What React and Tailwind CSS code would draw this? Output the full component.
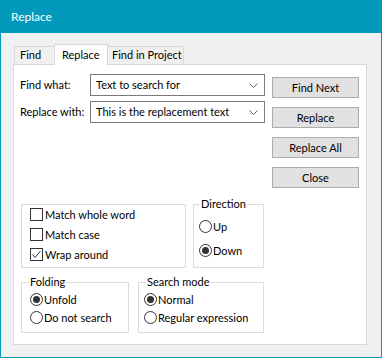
import { useState } from 'react';

const font = { fontFamily: 'Lato, "Liberation Sans", sans-serif' };

function Combo({ value }) {
  return (
    <div className="w-[175px] h-[22px] bg-white border border-[#7a7a7a] flex items-center justify-between pl-[5px] pr-[6px]">
      <span className="text-[11px] text-black whitespace-nowrap">{value}</span>
      <svg width="9" height="5" viewBox="0 0 9 5" fill="none" stroke="#606060" strokeWidth="1">
        <polyline points="0.5,0.5 4.5,4.5 8.5,0.5" />
      </svg>
    </div>
  );
}

function Btn({ children }) {
  return (
    <button type="button" className="w-[87px] h-[21px] bg-[#e1e1e1] border border-[#adadad] text-[11px] text-black leading-none">
      {children}
    </button>
  );
}

function CheckBox({ checked, label }) {
  return (
    <div className="flex items-center h-[13px]">
      <span className="w-[13px] h-[13px] border border-[#333] bg-white flex items-center justify-center">
        {checked && (
          <svg width="11" height="11" viewBox="0 0 11 11" fill="none" stroke="#333" strokeWidth="1">
            <polyline points="1.5,5.5 4,8.5 9.5,2" />
          </svg>
        )}
      </span>
      <span className="ml-[2px] text-[11px] text-black leading-none whitespace-nowrap">{label}</span>
    </div>
  );
}

function Radio({ checked, label }) {
  return (
    <div className="flex items-center h-[13px]">
      <span className="w-[13px] h-[13px] rounded-full border border-[#333] bg-white flex items-center justify-center">
        {checked && <span className="w-[7px] h-[7px] rounded-full bg-[#333]"></span>}
      </span>
      <span className="ml-[1px] text-[11px] text-black leading-none whitespace-nowrap">{label}</span>
    </div>
  );
}

export default function App() {
  const [tab] = useState('replace');

  return (
    <div style={font} className="w-[382px] h-[358px] flex flex-col border-x border-b border-[#0a98b7] bg-[#f0f0f0]">
      <div className="h-[33px] shrink-0 bg-[#0399ba] flex items-center pl-[11px] -mx-[1px]">
        <span className="text-white text-[12px]">Replace</span>
      </div>

      <div className="flex-1 flex flex-col pl-[12px] pr-[14px] pt-[11px] pb-[12px]">
        {/* tabs */}
        <div className="flex items-end pl-[1px] h-[21px] relative z-10 -mb-[1px]">
          <div className="w-[40px] h-[19px] pl-[5px] border border-r-0 border-[#d9d9d9] bg-[#f0f0f0] text-[11px] flex items-center">Find</div>
          <div className={`w-[54px] h-[21px] pl-[7px] border border-b-0 border-[#d9d9d9] ${tab === 'replace' ? 'bg-white' : ''} text-[11px] flex items-center`}>Replace</div>
          <div className="w-[76px] h-[19px] pl-[4px] border border-l-0 border-[#d9d9d9] bg-[#f0f0f0] text-[11px] flex items-center whitespace-nowrap">Find in Project</div>
        </div>

        {/* panel */}
        <div className="flex-1 bg-white border border-[#d9d9d9] flex flex-col pt-[9px] pl-[6px]">
          <div className="flex">
            <div className="flex flex-col gap-[5px]">
              <div className="flex items-center">
                <span className="w-[70px] text-[11px] whitespace-nowrap">Find what:</span>
                <Combo value="Text to search for" />
              </div>
              <div className="flex items-center">
                <span className="w-[70px] text-[11px] whitespace-nowrap">Replace with:</span>
                <Combo value="This is the replacement text" />
              </div>
            </div>
            <div className="flex flex-col gap-[9px] ml-[7px] mt-[3px]">
              <Btn>Find Next</Btn>
              <Btn>Replace</Btn>
              <Btn>Replace All</Btn>
              <Btn>Close</Btn>
            </div>
          </div>

          <div className="flex items-start gap-[7px] ml-[1px] mt-[9px]">
            <fieldset className="w-[165px] h-[64px] border border-[#dcdcdc] mt-[7px] pl-[8px] pt-[3px] flex flex-col gap-[7px]">
              <CheckBox label="Match whole word" />
              <CheckBox label="Match case" />
              <CheckBox checked label="Wrap around" />
            </fieldset>
            <fieldset className="w-[71px] h-[71px] border border-[#dcdcdc] pl-[5px]">
              <legend className="ml-[1px] px-[1px] text-[11px] leading-[14px]">Direction</legend>
              <div className="flex flex-col gap-[11px] mt-[9px]">
                <Radio label="Up" />
                <Radio checked label="Down" />
              </div>
            </fieldset>
          </div>

          <div className="flex items-start gap-[9px] ml-[1px] mt-[7px]">
            <fieldset className="w-[108px] h-[58px] border border-[#dcdcdc] pl-[8px]">
              <legend className="-ml-[1px] px-[1px] text-[11px] leading-[14px]">Folding</legend>
              <div className="flex flex-col gap-[5px] mt-[4px]">
                <Radio checked label="Unfold" />
                <Radio label="Do not search" />
              </div>
            </fieldset>
            <fieldset className="w-[126px] h-[58px] border border-[#dcdcdc] pl-[5px]">
              <legend className="ml-[2px] px-[1px] text-[11px] leading-[14px]">Search mode</legend>
              <div className="flex flex-col gap-[5px] mt-[4px]">
                <Radio checked label="Normal" />
                <Radio label="Regular expression" />
              </div>
            </fieldset>
          </div>
        </div>
      </div>
    </div>
  );
}
